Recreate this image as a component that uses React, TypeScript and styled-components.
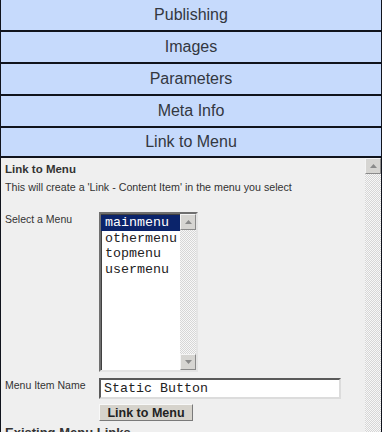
import styled, { createGlobalStyle } from 'styled-components';

const GlobalStyle = createGlobalStyle`
  html, body {
    margin: 0;
    padding: 0;
    background: #fff;
    font-family: "Liberation Sans", Arial, sans-serif;
  }
`

const Panel = styled.div`
  width: 382px;
  height: 432px;
  display: flex;
  flex-direction: column;
  overflow: hidden;
`

const Tab = styled.div<{ $height: number }>`
  height: ${p => p.$height}px;
  flex: none;
  display: flex;
  align-items: center;
  justify-content: center;
  background: #c6dafc;
  color: #33373f;
  font-size: 16px;
  border-left: 1px solid #10131c;
  border-right: 1px solid #10131c;
  border-bottom: 2px solid #10131c;
`

const Body = styled.div`
  flex: 1;
  display: flex;
  background: #efefef;
  border-left: 1px solid #10131c;
  border-right: 1px solid #10131c;
  min-height: 0;
`

const Main = styled.div`
  flex: 1;
  padding: 2px 0 0 4px;
  color: #333;
  font-size: 10.7px;
`

const Heading = styled.div`
  font-weight: bold;
  font-size: 11.5px;
  line-height: 18px;
`

const Note = styled.div`
  line-height: 18px;
`

const Row = styled.div<{ $top: number }>`
  display: flex;
  margin-top: ${p => p.$top}px;
`

const Label = styled.div`
  width: 94px;
  flex: none;
  padding-top: 1px;
  font-size: 10.5px;
`

const Field = styled.div`
  display: flex;
  flex-direction: column;
  gap: 5px;
`

const ListBox = styled.div`
  width: 95px;
  height: 156px;
  display: flex;
  background: #fff;
  border-top: 2px solid #6f6f6f;
  border-left: 2px solid #6f6f6f;
  border-right: 2px solid #e4e4e4;
  border-bottom: 2px solid #e4e4e4;
  box-shadow: inset 1px 1px 0 #404040;
`

const Items = styled.div`
  flex: 1;
  padding-top: 1px;
  font-family: "Liberation Mono", "Courier New", monospace;
  font-size: 13.33px;
  color: #222;
`

const Item = styled.div<{ $selected?: boolean }>`
  height: 15.5px;
  line-height: 15.5px;
  padding-left: 4px;
  background: ${p => (p.$selected ? '#0b246b' : 'transparent')};
  color: ${p => (p.$selected ? '#fff' : '#222')};
`

const Track = styled.div<{ $width: number }>`
  width: ${p => p.$width}px;
  flex: none;
  display: flex;
  flex-direction: column;
  justify-content: space-between;
  background: repeating-conic-gradient(#f7f7f7 0 25%, #d6d6d6 0 50%) 0 0 / 2px 2px;
`

const ArrowButton = styled.div`
  height: 16px;
  display: flex;
  align-items: center;
  justify-content: center;
  background: #d6d5d2;
  border-top: 1px solid #f4f4f4;
  border-left: 1px solid #f4f4f4;
  border-right: 1px solid #8a8a8a;
  border-bottom: 1px solid #8a8a8a;
  box-sizing: border-box;
`

const TextInput = styled.div`
  width: 235px;
  height: 17px;
  padding-left: 3px;
  box-sizing: content-box;
  display: flex;
  align-items: center;
  background: #fff;
  border-top: 2px solid #5a5a5a;
  border-left: 2px solid #5a5a5a;
  border-right: 2px solid #dcdcdc;
  border-bottom: 2px solid #dcdcdc;
  font-family: "Liberation Mono", "Courier New", monospace;
  font-size: 13.33px;
  color: #222;
`

const Button = styled.div`
  width: 94px;
  height: 17px;
  box-sizing: border-box;
  display: flex;
  align-items: center;
  justify-content: center;
  background: #d6d3cc;
  border-top: 1px solid #f8f8f8;
  border-left: 1px solid #f8f8f8;
  border-right: 1px solid #7a7a7a;
  border-bottom: 1px solid #7a7a7a;
  font-size: 12.5px;
  font-weight: bold;
  color: #222;
`

const SubHeading = styled.div`
  margin-top: 5px;
  font-size: 13px;
  line-height: 14px;
  font-weight: bold;
`

const Arrow = ({ up }: { up?: boolean }) => (
  <svg width="7" height="4" viewBox="0 0 7 4">
    <path d={up ? 'M0 4 L3.5 0 L7 4 Z' : 'M0 0 L3.5 4 L7 0 Z'} fill="#8a8a8a" />
  </svg>
)

const tabs = ['Publishing', 'Images', 'Parameters', 'Meta Info', 'Link to Menu']
const menus = ['mainmenu', 'othermenu', 'topmenu', 'usermenu']

export default function App() {
  return (
    <Panel>
      <GlobalStyle />
      {tabs.map((t, i) => (
        <Tab key={t} $height={i === tabs.length - 1 ? 28 : 30}>{t}</Tab>
      ))}
      <Body>
        <Main>
          <Heading>Link to Menu</Heading>
          <Note>This will create a 'Link - Content Item' in the menu you select</Note>
          <Row $top={16}>
            <Label>Select a Menu</Label>
            <ListBox>
              <Items>
                {menus.map((m, i) => (
                  <Item key={m} $selected={i === 0}>{m}</Item>
                ))}
              </Items>
              <Track $width={16}>
                <ArrowButton><Arrow up /></ArrowButton>
                <ArrowButton><Arrow /></ArrowButton>
              </Track>
            </ListBox>
          </Row>
          <Row $top={6}>
            <Label>Menu Item Name</Label>
            <Field>
              <TextInput>Static Button</TextInput>
              <Button>Link to Menu</Button>
            </Field>
          </Row>
          <SubHeading>Existing Menu Links</SubHeading>
        </Main>
        <Track $width={16}>
          <ArrowButton><Arrow up /></ArrowButton>
        </Track>
      </Body>
    </Panel>
  )
}
